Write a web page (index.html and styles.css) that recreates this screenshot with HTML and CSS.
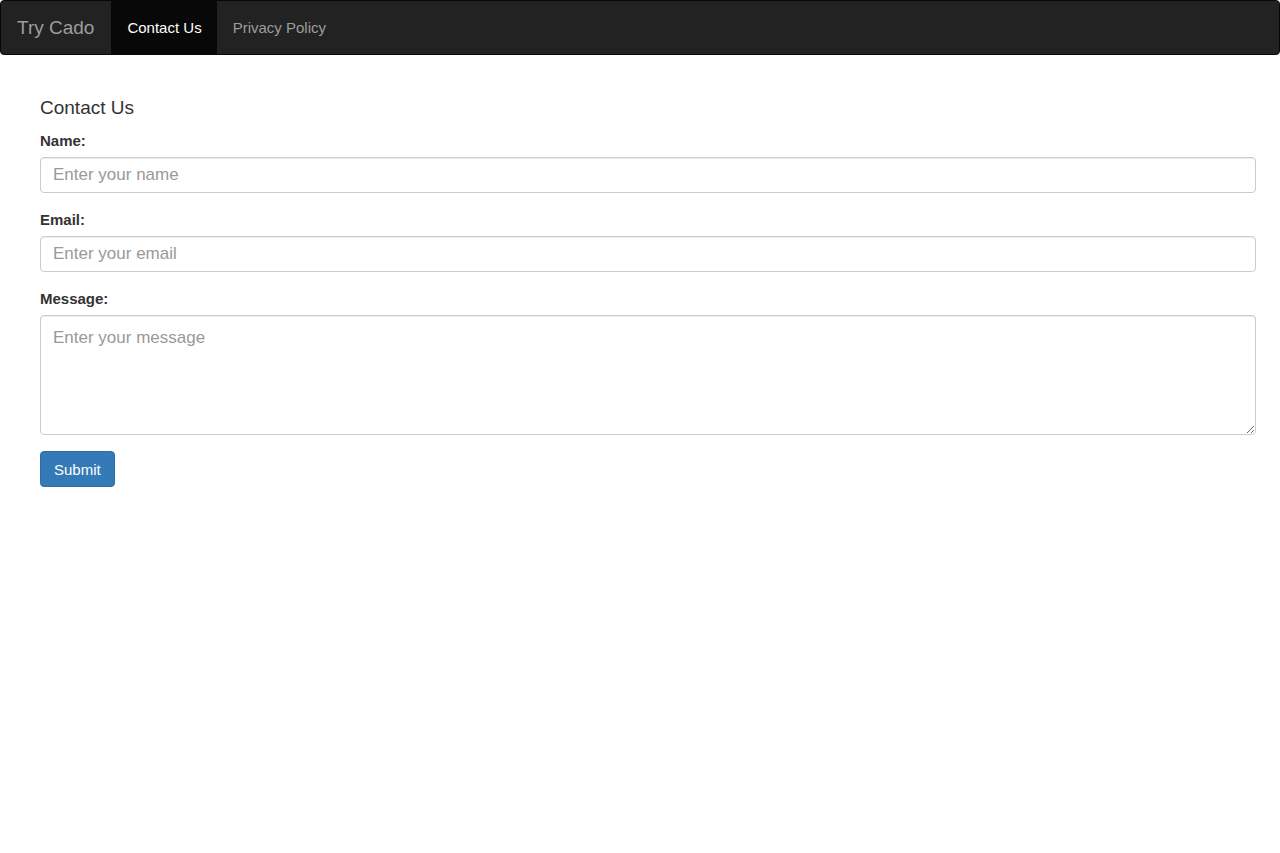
FILE: index.html
```html
<!DOCTYPE html>
<html lang="en">
<head>
    <meta charset="UTF-8">
    <meta name="viewport" content="width=device-width, initial-scale=1.0">
    <title>Contact Us - Try Cado</title>
    <link rel="stylesheet" href="styles.css">
</head>
<body>
    <nav class="navbar">
        <a class="brand" href="#">Try Cado</a>
        <ul class="nav">
            <li class="active"><a href="#">Contact Us</a></li>
            <li><a href="#">Privacy Policy</a></li>
        </ul>
    </nav>

    <div class="container">
        <h4 class="page-title">Contact Us</h4>
        <form id="contactForm">
            <div class="form-group">
                <label for="name">Name:</label>
                <input type="text" id="name" class="form-control" placeholder="Enter your name">
            </div>
            <div class="form-group">
                <label for="email">Email:</label>
                <input type="email" id="email" class="form-control" placeholder="Enter your email">
            </div>
            <div class="form-group">
                <label for="message">Message:</label>
                <textarea id="message" class="form-control message" placeholder="Enter your message"></textarea>
            </div>
            <button type="submit" class="btn-primary">Submit</button>
        </form>
    </div>
</body>
</html>
```

FILE: styles.css
```css
* {
    box-sizing: border-box;
}

body {
    margin: 0;
    font-family: "Liberation Sans", Arial, Helvetica, sans-serif;
    font-size: 15px;
    line-height: 1.42857;
    color: #333;
    background: #fff;
}

.navbar {
    display: flex;
    align-items: stretch;
    height: 55px;
    background: #222;
    border: 1px solid #080808;
    border-radius: 4px;
}

.brand {
    display: flex;
    align-items: center;
    padding: 0 17px 0 16px;
    font-size: 19px;
    color: #9d9d9d;
    text-decoration: none;
}

.nav {
    display: flex;
    margin: 0;
    padding: 0;
    list-style: none;
}

.nav li a {
    display: flex;
    align-items: center;
    height: 100%;
    padding: 0 15px 0 16px;
    color: #9d9d9d;
    text-decoration: none;
}

.nav li.active a {
    background: #080808;
    color: #fff;
}

.container {
    padding: 42px 24px 0 40px;
}

.page-title {
    margin: 0 0 12px;
    font-size: 19px;
    font-weight: 500;
    line-height: 22px;
}

.form-group {
    margin-bottom: 17px;
}

.form-group:last-of-type {
    margin-bottom: 16px;
}

label {
    display: block;
    margin-bottom: 6px;
    font-weight: bold;
    line-height: 20px;
}

.form-control {
    display: block;
    width: 100%;
    height: 36px;
    padding: 6px 12px;
    font-family: inherit;
    font-size: 17px;
    color: #555;
    background: #fff;
    border: 1px solid #ccc;
    border-radius: 4px;
    box-shadow: inset 0 1px 1px rgba(0,0,0,0.075);
}

.form-control::placeholder {
    color: #999;
}

.message {
    height: 120px;
    padding-top: 12px;
    resize: vertical;
}

.btn-primary {
    height: 36px;
    padding: 0 13px;
    font-family: inherit;
    font-size: 15px;
    color: #fff;
    background: #337ab7;
    border: 1px solid #2e6da4;
    border-radius: 4px;
    cursor: pointer;
}
```
